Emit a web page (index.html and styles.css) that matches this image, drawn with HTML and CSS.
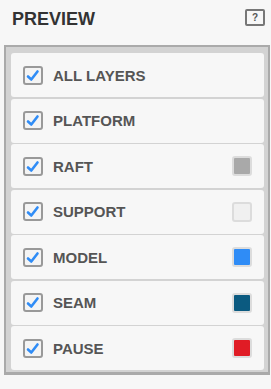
FILE: index.html
```html
<!DOCTYPE html>
<html lang="en">
<head>
    <meta charset="UTF-8">
    <meta name="viewport" content="width=device-width, initial-scale=1.0">
    <title>Preview</title>
    <link rel="stylesheet" href="styles.css">
</head>
<body>
    <div class="head">
        <h2 class="title">PREVIEW</h2>
        <span class="help">?</span>
    </div>

    <div class="panel">
        <div class="row">
            <span class="check"><svg viewBox="0 0 16 15" width="16" height="15"><path d="M3 8.5 L6.3 11.5 L12.5 3.5" fill="none" stroke="#2f8cf6" stroke-width="2.6" stroke-linecap="round" stroke-linejoin="round"/></svg></span>
            <span class="label">ALL LAYERS</span>
        </div>
        <div class="row">
            <span class="check"><svg viewBox="0 0 16 15" width="16" height="15"><path d="M3 8.5 L6.3 11.5 L12.5 3.5" fill="none" stroke="#2f8cf6" stroke-width="2.6" stroke-linecap="round" stroke-linejoin="round"/></svg></span>
            <span class="label">PLATFORM</span>
        </div>
        <div class="row">
            <span class="check"><svg viewBox="0 0 16 15" width="16" height="15"><path d="M3 8.5 L6.3 11.5 L12.5 3.5" fill="none" stroke="#2f8cf6" stroke-width="2.6" stroke-linecap="round" stroke-linejoin="round"/></svg></span>
            <span class="label">RAFT</span>
            <span class="swatch raft"></span>
        </div>
        <div class="row">
            <span class="check"><svg viewBox="0 0 16 15" width="16" height="15"><path d="M3 8.5 L6.3 11.5 L12.5 3.5" fill="none" stroke="#2f8cf6" stroke-width="2.6" stroke-linecap="round" stroke-linejoin="round"/></svg></span>
            <span class="label">SUPPORT</span>
            <span class="swatch support"></span>
        </div>
        <div class="row">
            <span class="check"><svg viewBox="0 0 16 15" width="16" height="15"><path d="M3 8.5 L6.3 11.5 L12.5 3.5" fill="none" stroke="#2f8cf6" stroke-width="2.6" stroke-linecap="round" stroke-linejoin="round"/></svg></span>
            <span class="label">MODEL</span>
            <span class="swatch model"></span>
        </div>
        <div class="row">
            <span class="check"><svg viewBox="0 0 16 15" width="16" height="15"><path d="M3 8.5 L6.3 11.5 L12.5 3.5" fill="none" stroke="#2f8cf6" stroke-width="2.6" stroke-linecap="round" stroke-linejoin="round"/></svg></span>
            <span class="label">SEAM</span>
            <span class="swatch seam"></span>
        </div>
        <div class="row">
            <span class="check"><svg viewBox="0 0 16 15" width="16" height="15"><path d="M3 8.5 L6.3 11.5 L12.5 3.5" fill="none" stroke="#2f8cf6" stroke-width="2.6" stroke-linecap="round" stroke-linejoin="round"/></svg></span>
            <span class="label">PAUSE</span>
            <span class="swatch pause"></span>
        </div>
    </div>
</body>
</html>
```

FILE: styles.css
```css
body {
    margin: 0;
    background-color: #f7f7f7;
    font-family: "Liberation Sans", Arial, sans-serif;
}

.head {
    display: flex;
    justify-content: space-between;
    align-items: flex-start;
    height: 45px;
    padding: 0 6px 0 12px;
    box-sizing: border-box;
}
.title {
    margin: 0;
    padding-top: 9px;
    font-size: 18px;
    line-height: 20px;
    font-weight: bold;
    color: #333;
}
.help {
    margin-top: 9px;
    width: 16px;
    height: 13px;
    border: 2px solid #777;
    border-radius: 2px;
    font-size: 10px;
    line-height: 13px;
    font-weight: bold;
    text-align: center;
    color: #555;
}

.panel {
    display: flex;
    flex-direction: column;
    gap: 1.5px;
    margin: 0 1px 0 4px;
    padding: 6px 4px 2px 5px;
    background-color: #d3d3d3;
    border: 2px solid #aaa;
    border-bottom-width: 3px;
}
.row {
    display: flex;
    align-items: center;
    height: 44px;
    padding: 0 12px;
    background-color: #f7f7f7;
    border-radius: 3px;
}
.check {
    display: flex;
    align-items: center;
    justify-content: center;
    width: 16px;
    height: 15px;
    border: 2px solid #999;
    border-radius: 3px;
    background-color: #f4f4f4;
    margin-right: 10px;
}
.label {
    flex: 1;
    font-size: 15px;
    font-weight: bold;
    color: #555;
}
.swatch {
    width: 16px;
    height: 16px;
    border: 2px solid #dcdcdc;
    border-radius: 3px;
}
.raft { background-color: #a9a9a9; }
.support { background-color: #f0f0f0; }
.model { background-color: #2f8cf6; }
.seam { background-color: #0b5a80; }
.pause { background-color: #e01c25; }
```
